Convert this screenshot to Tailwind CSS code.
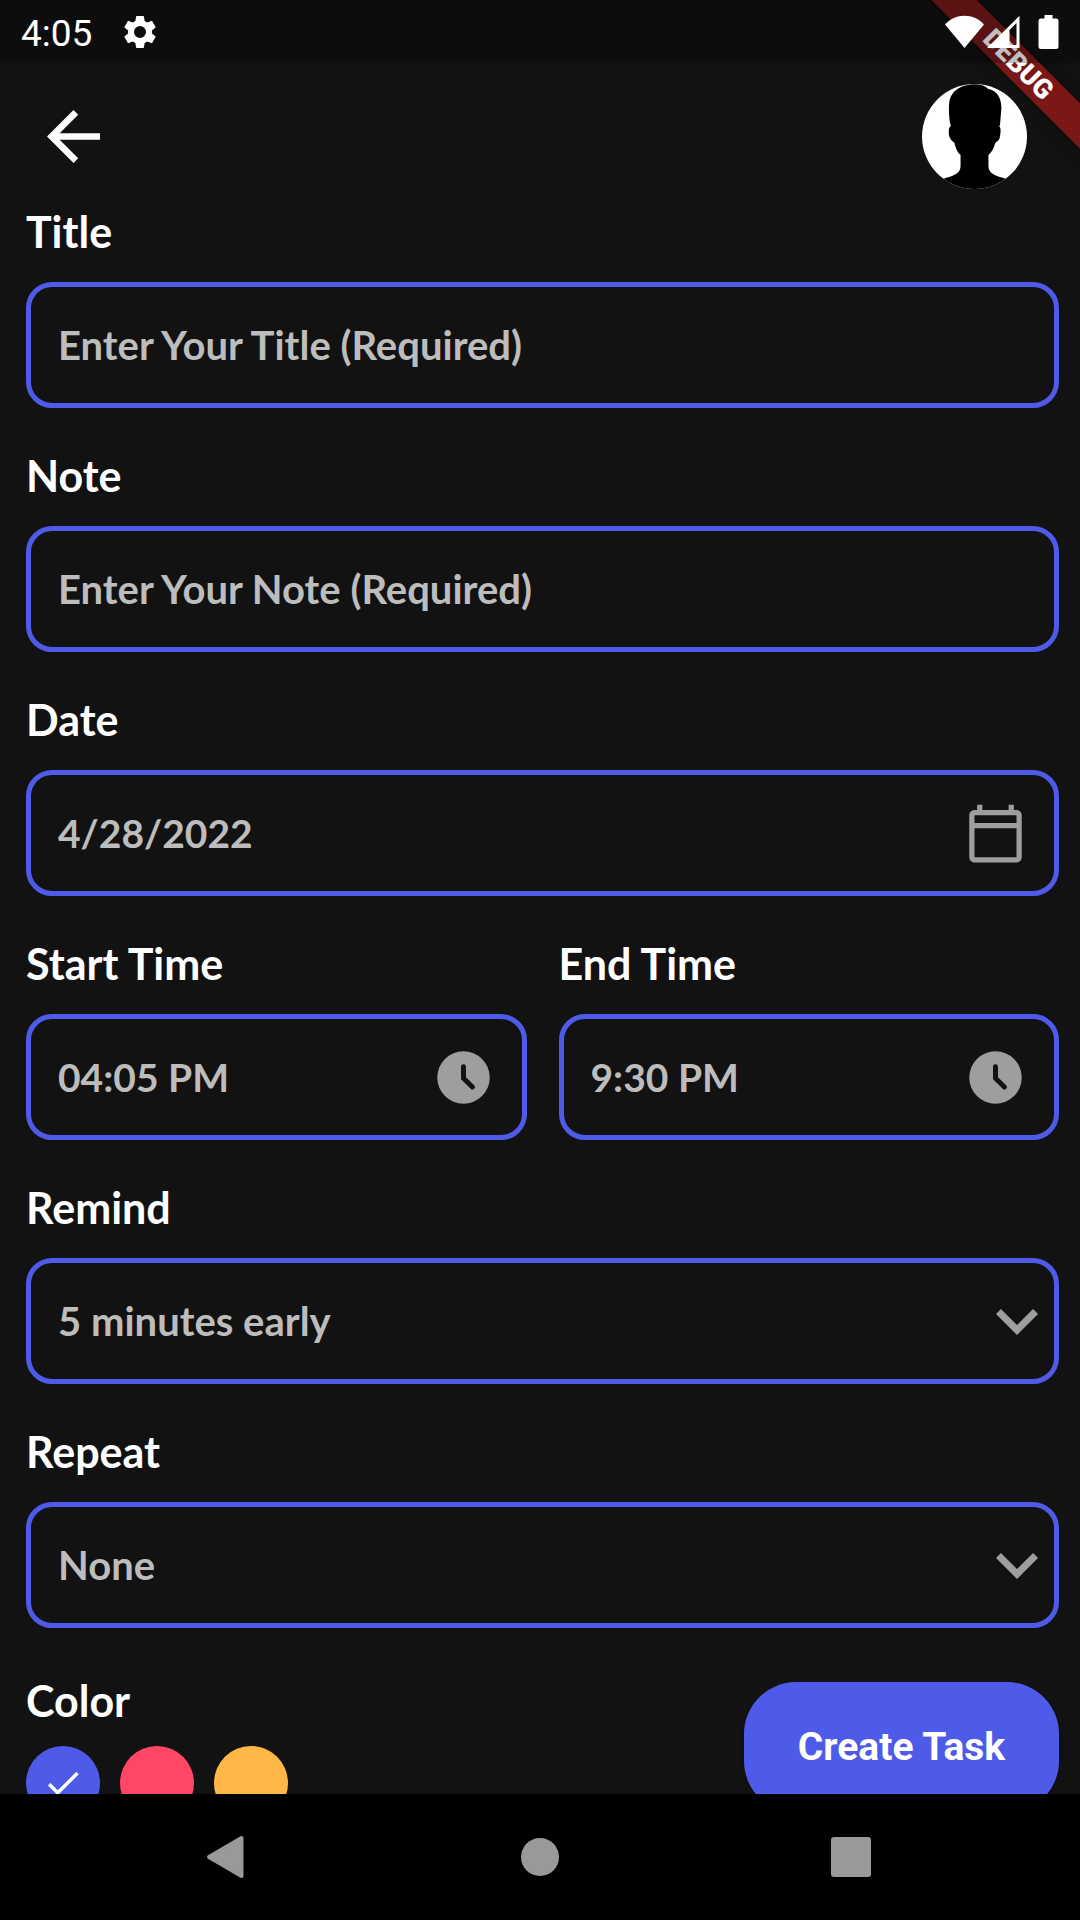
<!DOCTYPE html>
<html lang="en">
<head>
<meta charset="utf-8">
<meta name="viewport" content="width=device-width, initial-scale=1">
<title>Create Task</title>
<script src="https://cdn.jsdelivr.net/npm/@tailwindcss/browser@4"></script>
</head>
<body class="relative flex h-screen flex-col overflow-hidden bg-[#121212] font-['Lato',sans-serif] text-white">

  <!-- Debug ribbon, under the translucent status bar -->
  <div class="pointer-events-none absolute top-0 right-0 size-60 overflow-hidden z-10">
    <div class="absolute top-[47px] right-[-67px] flex h-8 w-[260px] rotate-45 items-center justify-center bg-[#b71c1c]/63 pl-1 font-['Roboto',sans-serif] text-[27px] leading-8 font-black shadow-[0_0_16px_rgba(0,0,0,0.5)]">DEBUG</div>
  </div>

  <!-- Status bar -->
  <div class="relative z-20 flex h-[63px] shrink-0 items-center bg-black/25 px-[21px]">
    <span class="pt-1 font-['Roboto',sans-serif] text-[37px] leading-10">4:05</span>
    <svg class="ml-7 size-10" viewBox="0 0 24 24" fill="#fff" aria-hidden="true"><path d="M19.14 12.94c.04-.3.06-.61.06-.94 0-.32-.02-.64-.07-.94l2.03-1.58a.49.49 0 0 0 .12-.61l-1.92-3.32a.49.49 0 0 0-.59-.22l-2.39.96c-.5-.38-1.03-.7-1.62-.94l-.36-2.54a.48.48 0 0 0-.48-.41h-3.84c-.24 0-.43.17-.47.41l-.36 2.54c-.59.24-1.13.57-1.62.94l-2.39-.96a.48.48 0 0 0-.59.22L2.74 8.87a.48.48 0 0 0 .12.61l2.03 1.58c-.05.3-.09.63-.09.94s.02.64.07.94l-2.03 1.58a.49.49 0 0 0-.12.61l1.92 3.32c.12.22.37.29.59.22l2.39-.96c.5.38 1.03.7 1.62.94l.36 2.54c.05.24.24.41.48.41h3.84c.24 0 .44-.17.47-.41l.36-2.54c.59-.24 1.13-.56 1.62-.94l2.39.96c.22.08.47 0 .59-.22l1.92-3.32a.48.48 0 0 0-.12-.61zM12 15.6A3.6 3.6 0 1 1 12 8.4a3.6 3.6 0 0 1 0 7.2z"/></svg>
    <div class="ml-auto flex items-center">
      <svg class="h-[34px] w-[39px]" viewBox="0 0 39 34" fill="#fff" aria-hidden="true"><path d="M19.500 33 0 9.500C5 4 12 .7 19.500.7S34 4 39 9.500z"/></svg>
      <svg class="ml-[3px] h-[34px] w-[33px]" viewBox="0 0 33 34" fill="#fff" fill-rule="evenodd" aria-hidden="true"><path d="M0 33 32.500.7V33zM22.500 15v15h7V8z"/></svg>
      <svg class="ml-[18px] h-[34px] w-[21px]" viewBox="0 0 21 34" fill="#fff" aria-hidden="true"><path d="M6.500 0h8v3.500H18A2.500 2.500 0 0 1 20.500 6v25.500A2.500 2.500 0 0 1 18 34H3A2.500 2.500 0 0 1 .5 31.500V6A2.500 2.500 0 0 1 3 3.500h3.500z"/></svg>
    </div>
  </div>

  <div class="flex min-h-0 flex-1 flex-col overflow-y-auto [scrollbar-width:none]">
    <header class="flex shrink-0 items-center justify-between pt-[21px] pr-[53px] pb-[17px] pl-[47px]">
      <button type="button" aria-label="Back"><svg class="size-[53px]" viewBox="4 4 16 16" fill="#fff"><path d="M20 11H7.830l5.590-5.590L12 4l-8 8 8 8 1.410-1.410L7.830 13H20z"/></svg></button>
      <svg class="size-[105px] rounded-full bg-white" viewBox="247 252 316 316" role="img" aria-label="Profile"><path d="M405 253c17 0 32 4 41 14 26 5 39 24 40 56l-4 50c-1 4-3 8-2 8 6 1 3 26 0 36-2 6-8 8-13 13-3 14-9 25-20 36v34c0 25 30 29 51 37v35H312v-35c21-8 51-12 51-37v-34c-10-9-15-22-19-38-7-4-14-12-16-22-1-11-1-25 5-26 1-4-1-8-2-12-3-20-4-46-2-60 5-37 39-55 76-55z"/></svg>
    </header>

    <form class="flex flex-col pr-[21px] pb-10 pl-[26px]">
      <div class="flex flex-col gap-[42px]">
        <div class="flex flex-col gap-6">
          <label for="title" class="text-[43px] leading-[52px] font-bold">Title</label>
          <input id="title" type="text" placeholder="Enter Your Title (Required)" class="h-[126px] w-full rounded-[26px] border-5 border-[#4e5ae8] px-[27px] text-[40px] font-bold text-[#bdbdbd] outline-none placeholder:text-[#bdbdbd]">
        </div>
        <div class="flex flex-col gap-6">
          <label for="note" class="text-[43px] leading-[52px] font-bold">Note</label>
          <input id="note" type="text" placeholder="Enter Your Note (Required)" class="h-[126px] w-full rounded-[26px] border-5 border-[#4e5ae8] px-[27px] text-[40px] font-bold text-[#bdbdbd] outline-none placeholder:text-[#bdbdbd]">
        </div>
        <div class="flex flex-col gap-6">
          <label for="date" class="text-[43px] leading-[52px] font-bold">Date</label>
          <div class="flex h-[126px] items-center rounded-[26px] border-5 border-[#4e5ae8] px-[27px]">
            <input id="date" type="text" value="4/28/2022" class="min-w-0 flex-1 text-[39px] font-bold text-[#bdbdbd] outline-none">
            <button type="button" aria-label="Pick a date"><svg class="size-[63px]" viewBox="0 0 24 24" fill="#9e9e9e"><path d="M20 3h-1V1h-2v2H7V1H5v2H4c-1.100 0-2 .9-2 2v16c0 1.100.9 2 2 2h16c1.100 0 2-.9 2-2V5c0-1.100-.9-2-2-2zm0 18H4V10h16v11zm0-13H4V5h16v3z"/></svg></button>
          </div>
        </div>
        <div class="grid grid-cols-2 gap-8">
          <div class="flex flex-col gap-6">
            <label for="start" class="text-[43px] leading-[52px] font-bold">Start Time</label>
            <div class="flex h-[126px] items-center rounded-[26px] border-5 border-[#4e5ae8] px-[27px]">
              <input id="start" type="text" value="04:05 PM" class="min-w-0 flex-1 text-[39px] font-bold text-[#bdbdbd] outline-none">
              <button type="button" aria-label="Pick a start time"><svg class="size-[63px]" viewBox="0 0 24 24" fill="none"><circle cx="12" cy="12" r="10" fill="#9e9e9e"/><path d="M12 7.900v4.400l3.400 3.300" stroke="#121212" stroke-width="1.900" stroke-linecap="round"/></svg></button>
            </div>
          </div>
          <div class="flex flex-col gap-6">
            <label for="end" class="text-[43px] leading-[52px] font-bold">End Time</label>
            <div class="flex h-[126px] items-center rounded-[26px] border-5 border-[#4e5ae8] px-[27px]">
              <input id="end" type="text" value="9:30 PM" class="min-w-0 flex-1 text-[39px] font-bold text-[#bdbdbd] outline-none">
              <button type="button" aria-label="Pick an end time"><svg class="size-[63px]" viewBox="0 0 24 24" fill="none"><circle cx="12" cy="12" r="10" fill="#9e9e9e"/><path d="M12 7.900v4.400l3.400 3.300" stroke="#121212" stroke-width="1.900" stroke-linecap="round"/></svg></button>
            </div>
          </div>
        </div>
        <div class="flex flex-col gap-6">
          <label for="remind" class="text-[43px] leading-[52px] font-bold">Remind</label>
          <div class="relative flex h-[126px] rounded-[26px] border-5 border-[#4e5ae8]">
            <select id="remind" class="flex-1 appearance-none px-[27px] text-[40px] font-bold text-[#bdbdbd] outline-none"><option>5 minutes early</option><option>10 minutes early</option><option>15 minutes early</option><option>20 minutes early</option></select>
            <svg class="pointer-events-none absolute inset-y-0 right-4 my-auto h-7 w-[42px]" viewBox="6 8 12 8" fill="#9e9e9e" aria-hidden="true"><path d="M7.410 8.590 12 13.170l4.590-4.580L18 10l-6 6-6-6z"/></svg>
          </div>
        </div>
        <div class="flex flex-col gap-6">
          <label for="repeat" class="text-[43px] leading-[52px] font-bold">Repeat</label>
          <div class="relative flex h-[126px] rounded-[26px] border-5 border-[#4e5ae8]">
            <select id="repeat" class="flex-1 appearance-none px-[27px] text-[40px] font-bold text-[#bdbdbd] outline-none"><option>None</option><option>Daily</option><option>Weekly</option><option>Monthly</option></select>
            <svg class="pointer-events-none absolute inset-y-0 right-4 my-auto h-7 w-[42px]" viewBox="6 8 12 8" fill="#9e9e9e" aria-hidden="true"><path d="M7.410 8.590 12 13.170l4.590-4.580L18 10l-6 6-6-6z"/></svg>
          </div>
        </div>
      </div>

      <div class="mt-[47px] flex items-center justify-between">
        <fieldset>
          <legend class="text-[43px] leading-[52px] font-bold">Color</legend>
          <div class="mt-[19px] flex gap-5">
            <label class="relative block size-[74px]">
              <input type="radio" name="color" aria-label="Blue" checked class="peer block size-full appearance-none rounded-full bg-[#4e5ae8]">
              <svg class="pointer-events-none absolute inset-0 m-auto hidden size-[42px] peer-checked:block" viewBox="0 0 24 24" fill="#fff" aria-hidden="true"><path d="M9 16.200 4.800 12l-1.400 1.400L9 19 21 7l-1.400-1.400z"/></svg>
            </label>
            <label class="relative block size-[74px]">
              <input type="radio" name="color" aria-label="Pink" class="peer block size-full appearance-none rounded-full bg-[#ff4667]">
              <svg class="pointer-events-none absolute inset-0 m-auto hidden size-[42px] peer-checked:block" viewBox="0 0 24 24" fill="#fff" aria-hidden="true"><path d="M9 16.200 4.800 12l-1.400 1.400L9 19 21 7l-1.400-1.400z"/></svg>
            </label>
            <label class="relative block size-[74px]">
              <input type="radio" name="color" aria-label="Yellow" class="peer block size-full appearance-none rounded-full bg-[#ffb746]">
              <svg class="pointer-events-none absolute inset-0 m-auto hidden size-[42px] peer-checked:block" viewBox="0 0 24 24" fill="#fff" aria-hidden="true"><path d="M9 16.200 4.800 12l-1.400 1.400L9 19 21 7l-1.400-1.400z"/></svg>
            </label>
          </div>
        </fieldset>
        <button type="submit" class="h-[131px] w-[315px] rounded-[52px] bg-[#4e5ae8] font-['Roboto',sans-serif] text-[39px] font-bold shadow-md">Create Task</button>
      </div>
    </form>
  </div>

  <!-- System navigation -->
  <nav class="relative grid h-[126px] shrink-0 grid-cols-3 items-center justify-items-center bg-black px-[72px]">
    <button type="button" aria-label="System back"><svg class="size-16" viewBox="0 0 64 64"><path d="M13 32 45.500 13v38z" fill="#999" stroke="#999" stroke-width="4" stroke-linejoin="round"/></svg></button>
    <button type="button" aria-label="Home"><svg class="size-16" viewBox="0 0 64 64" fill="#999"><circle cx="32" cy="32" r="19"/></svg></button>
    <button type="button" aria-label="Recent apps"><svg class="size-16" viewBox="0 0 64 64" fill="#999"><rect x="11" y="12" width="40" height="40" rx="3"/></svg></button>
  </nav>
</body>
</html>
